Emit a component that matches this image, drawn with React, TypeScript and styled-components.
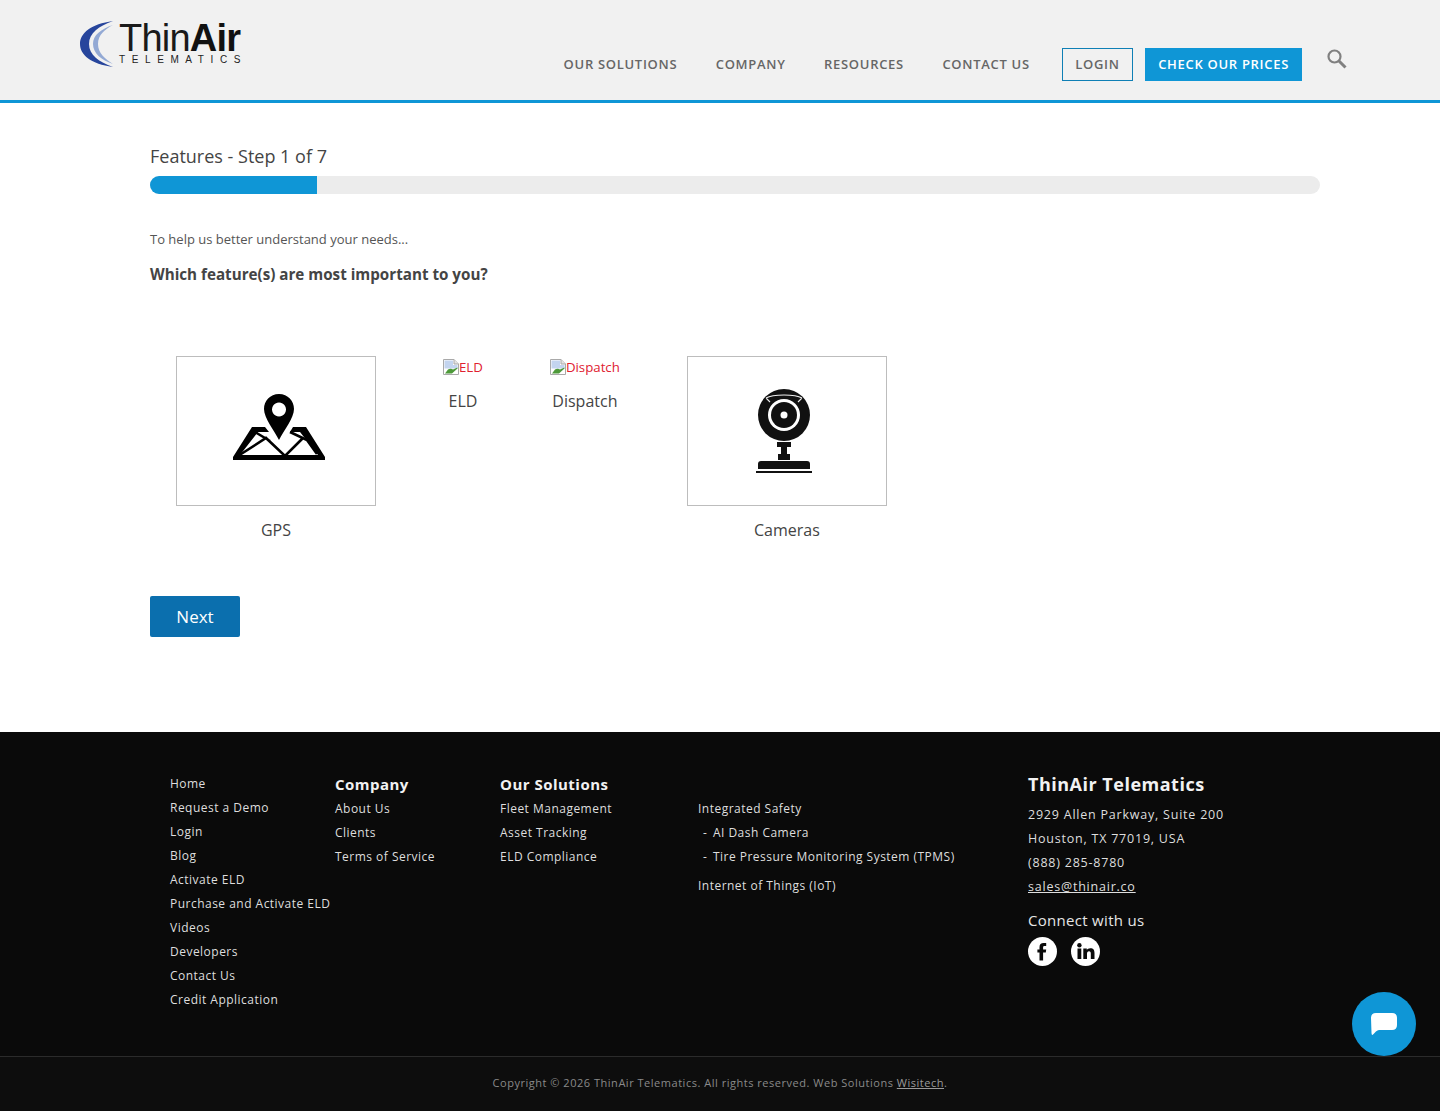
import React from "react";
import styled, { createGlobalStyle } from "styled-components";

const Global = createGlobalStyle`
  html, body { margin: 0; padding: 0; background: #fff; }
  body { font-family: "Open Sans", "Liberation Sans", sans-serif; color: #444; }
  * { box-sizing: border-box; }
`;

const Page = styled.div`
  width: 1440px;
  height: 1111px;
  overflow: hidden;
  position: relative;
  display: flex;
  flex-direction: column;
`;

const Header = styled.header`
  height: 103px;
  flex: none;
  background: #f1f1f1;
  border-bottom: 3px solid #0f96d6;
  display: flex;
  align-items: flex-start;
  padding: 0 92px 0 80px;
`;

const LogoBox = styled.div`
  display: flex;
  align-items: flex-start;
  padding-top: 19px;
  width: 170px;
  flex: none;
`;

const LogoText = styled.div`
  display: flex;
  flex-direction: column;
  margin-left: -1px;
`;

const LogoName = styled.div`
  font-family: "Liberation Sans", Arial, sans-serif;
  font-size: 38px;
  line-height: 36px;
  letter-spacing: -0.8px;
  margin-top: 1px;
  color: #1a1a1a;
  white-space: nowrap;
  b { font-weight: 700; color: #111; }
`;

const LogoSub = styled.div`
  font-family: "Liberation Sans", Arial, sans-serif;
  font-size: 10px;
  line-height: 12px;
  letter-spacing: 6.6px;
  color: #222;
  margin-top: -2px;
  white-space: nowrap;
`;

const Nav = styled.nav`
  margin-left: auto;
  display: flex;
  align-items: flex-start;
  padding-top: 48px;
`;

const NavLink = styled.a`
  font-size: 13px;
  font-weight: 600;
  letter-spacing: 0.7px;
  line-height: 33px;
  color: #666;
  margin-right: 38.5px;
  white-space: nowrap;
  &:nth-child(4) { margin-right: 32px; }
`;

const LoginButton = styled.a`
  height: 33px;
  padding: 0 12.5px;
  border: 1px solid #0f7fb5;
  font-size: 13px;
  font-weight: 600;
  letter-spacing: 0.7px;
  line-height: 31px;
  color: #666;
  margin-right: 12px;
`;

const PriceButton = styled.a`
  height: 33px;
  padding: 0 13px;
  background: #0f96d6;
  font-size: 13px;
  font-weight: 600;
  letter-spacing: 0.7px;
  line-height: 33px;
  color: #fff;
  margin-right: 24px;
`;

const SearchIcon = styled.svg`
  width: 22px;
  height: 22px;
  display: block;
`;

const Main = styled.main`
  flex: 1;
  padding: 41px 120px 0 150px;
`;

const StepTitle = styled.h2`
  margin: 0;
  font-size: 18px;
  font-weight: 400;
  line-height: 25px;
  color: #444;
`;

const Progress = styled.div`
  margin-top: 7px;
  height: 18px;
  border-radius: 9px;
  background: #ececec;
  overflow: hidden;
`;

const ProgressFill = styled.div`
  height: 100%;
  background: #0f96d6;
`;

const Intro = styled.p`
  margin: 35px 0 0;
  font-size: 13px;
  line-height: 20px;
  color: #555;
`;

const Question = styled.p`
  margin: 14px 0 0;
  font-size: 15.2px;
  font-weight: 700;
  line-height: 22px;
  color: #444;
`;

const Options = styled.div`
  display: flex;
  align-items: flex-start;
  gap: 67px;
  padding-left: 26px;
  margin-top: 71px;
`;

const Option = styled.div`
  display: flex;
  flex-direction: column;
  align-items: center;
`;

const Tile = styled.div`
  width: 200px;
  height: 150px;
  border: 1px solid #bdbdbd;
  display: flex;
  align-items: center;
  justify-content: center;
`;

const TileIcon = styled.svg<{ $dx: number; $dy: number }>`
  display: block;
  transform: translate(${(p) => p.$dx}px, ${(p) => p.$dy}px);
`;

const TileLabel = styled.div`
  margin-top: 13px;
  font-size: 16px;
  line-height: 22px;
  color: #444;
`;

const BrokenImage = styled.div`
  display: flex;
  align-items: center;
  height: 22px;
  font-size: 13.25px;
  line-height: 22px;
  color: #e02030;
  white-space: nowrap;
`;

const BrokenLabel = styled.div`
  margin-top: 12px;
  font-size: 16px;
  line-height: 22px;
  color: #444;
`;

const NextButton = styled.button`
  display: block;
  margin-top: 55px;
  width: 90px;
  height: 41px;
  border: 0;
  border-radius: 2px;
  background: #0b6fae;
  color: #fff;
  font-family: inherit;
  font-size: 17px;
  padding: 0;
`;

const Footer = styled.footer`
  flex: none;
  height: 379px;
  background: #0a0a0a;
  color: #e6e6e6;
  display: flex;
  flex-direction: column;
`;

const FooterColumns = styled.div`
  height: 324px;
  display: grid;
  grid-template-columns: 165px 165px 198px 330px 1fr;
  padding: 40px 0 0 170px;
`;

const FooterColumn = styled.div`
  display: flex;
  flex-direction: column;
  align-items: flex-start;
`;

const FooterHeading = styled.div`
  font-size: 15px;
  font-weight: 700;
  line-height: 24px;
  letter-spacing: 0.48px;
  color: #f2f2f2;
  height: 25px;
`;

const FooterLink = styled.a<{ $gap?: number; $indent?: number }>`
  font-size: 12px;
  line-height: 24px;
  letter-spacing: 0.48px;
  color: #dedede;
  white-space: pre;
  margin-top: ${(p) => p.$gap ?? 0}px;
  margin-left: ${(p) => p.$indent ?? 0}px;
`;

const Dash = styled.span`
  margin-right: 2px;
`;

const Spacer = styled.div`
  height: 25px;
`;

const CompanyName = styled.div`
  font-size: 18px;
  font-weight: 700;
  line-height: 24px;
  letter-spacing: 0.5px;
  color: #f2f2f2;
  margin: 0 0 7px;
`;

const AddressLine = styled.div`
  font-size: 12.5px;
  line-height: 24px;
  letter-spacing: 0.78px;
  color: #dedede;
`;

const MailLink = styled(AddressLine)`
  text-decoration: underline;
`;

const Connect = styled.div`
  font-size: 15px;
  line-height: 22px;
  letter-spacing: 0.3px;
  color: #e6e6e6;
  margin-top: 10px;
`;

const Socials = styled.div`
  display: flex;
  gap: 14px;
  margin-top: 6px;
`;

const Social = styled.svg`
  width: 29px;
  height: 29px;
  display: block;
`;

const Copyright = styled.div`
  flex: 1;
  border-top: 1px solid #2b2b2b;
  background: #0d0d0d;
  display: flex;
  justify-content: center;
  padding-top: 16px;
  font-size: 11px;
  line-height: 20px;
  letter-spacing: 0.52px;
  color: #8a8a8a;
  a { text-decoration: underline; color: #9a9a9a; }
`;

const ChatButton = styled.div`
  position: absolute;
  left: 1352px;
  top: 992px;
  width: 64px;
  height: 64px;
  border-radius: 50%;
  background: #0f96d6;
  display: flex;
  align-items: center;
  justify-content: center;
`;

const BrokenIcon = () => (
  <svg width="16" height="16" viewBox="0 0 16 16" style={{ display: "block", flex: "none" }}>
    <path d="M.5 .5H11L15.5 5V15.5H.5Z" fill="#fff" stroke="#a9a9a9" />
    <path d="M11 .5V5H15.5" fill="#e4e4e4" stroke="#a9a9a9" />
    <path d="M1.5 1.5H10V6H14.5V9.5H1.5Z" fill="#c3d4ef" />
    <path d="M2 14.5 L5 10.5 C7 9 9 10 10 10.5 L14.5 8.5 V9.5 L9 14.5Z" fill="#4e9a3a" />
  </svg>
);

const nav = ["OUR SOLUTIONS", "COMPANY", "RESOURCES", "CONTACT US"];
const col1 = ["Home", "Request a Demo", "Login", "Blog", "Activate ELD", "Purchase and Activate ELD", "Videos", "Developers", "Contact Us", "Credit Application"];
const col2 = ["About Us", "Clients", "Terms of Service"];
const col3 = ["Fleet Management", "Asset Tracking", "ELD Compliance"];

export default function App() {
  return (
    <Page>
      <Global />
      <Header>
        <LogoBox>
          <svg width="40" height="50" viewBox="0 0 40 50" style={{ flex: "none", display: "block" }}>
            <path d="M33 2 C11 5 0 14 0 25 C0 36 11 45 33 48 C19 43 9 36 9 25 C9 14 19 7 33 2Z" fill="#27459c" />
            <path d="M33 6 C21 10 13 16 13 25 C13 34 21 41 33 45 C25 40 18 34 18 25 C18 16 25 10 33 6Z" fill="#93a9d4" />
          </svg>
          <LogoText>
            <LogoName>Thin<b>Air</b></LogoName>
            <LogoSub>TELEMATICS</LogoSub>
          </LogoText>
        </LogoBox>
        <Nav>
          {nav.map((n) => <NavLink key={n}>{n}</NavLink>)}
          <LoginButton>LOGIN</LoginButton>
          <PriceButton>CHECK OUR PRICES</PriceButton>
          <SearchIcon viewBox="0 0 22 22">
            <circle cx="8.5" cy="8.5" r="6" fill="none" stroke="#808080" strokeWidth="2.2" />
            <path d="M13 13 L19.5 19.5" stroke="#808080" strokeWidth="3" />
          </SearchIcon>
        </Nav>
      </Header>
      <Main>
        <StepTitle>Features - Step 1 of 7</StepTitle>
        <Progress><ProgressFill style={{ width: `${(1 / 7) * 100}%` }} /></Progress>
        <Intro>To help us better understand your needs...</Intro>
        <Question>Which feature(s) are most important to you?</Question>
        <Options>
          <Option>
            <Tile>
              <TileIcon $dx={3} $dy={-4} width="92" height="66" viewBox="0 0 92 66">
                <path fillRule="evenodd" d="M46 0 C37 0 31 7 31 15 C31 24 41 36 46 46 C51 36 61 24 61 15 C61 7 55 0 46 0Z M46 8.5 A7 7 0 1 0 46.01 8.5Z" fill="#000" />
                <path d="M0 66 L0 63 L19 33 H32 L36 38 H25 L7 61 H85 L67 38 H57 L60 33 H73 L92 63 V66Z" fill="#000" />
                <path d="M5 62 L33 44 L52 62 L70 44 M22 38 L37 47 M57 38 L74 46 L84 60" fill="none" stroke="#000" strokeWidth="2.6" />
              </TileIcon>
            </Tile>
            <TileLabel>GPS</TileLabel>
          </Option>
          <Option>
            <BrokenImage><BrokenIcon />ELD</BrokenImage>
            <BrokenLabel>ELD</BrokenLabel>
          </Option>
          <Option>
            <BrokenImage><BrokenIcon />Dispatch</BrokenImage>
            <BrokenLabel>Dispatch</BrokenLabel>
          </Option>
          <Option>
            <Tile>
              <TileIcon $dx={-3} $dy={0} width="56" height="84" viewBox="0 0 56 84">
                <circle cx="28" cy="26" r="26" fill="#111" />
                <path d="M10 9 C17 5 39 5 46 9 M10 9 L14 13 M46 9 L42 13" fill="none" stroke="#eee" strokeWidth="1.1" />
                <circle cx="28" cy="26" r="16" fill="#fff" />
                <circle cx="28" cy="26" r="13" fill="#111" />
                <circle cx="28" cy="26" r="3.5" fill="#fff" />
                <path d="M21 53 H35 V58 H31 V65 H34 V71 H22 V65 H25 V58 H21Z" fill="#111" />
                <path d="M2 80 V75 Q2 72 5 72 H51 Q54 72 54 75 V80Z" fill="#111" />
                <path d="M0 82 H56 V84 H0Z" fill="#111" />
              </TileIcon>
            </Tile>
            <TileLabel>Cameras</TileLabel>
          </Option>
        </Options>
        <NextButton>Next</NextButton>
      </Main>
      <Footer>
        <FooterColumns>
          <FooterColumn>
            {col1.map((t) => <FooterLink key={t}>{t}</FooterLink>)}
          </FooterColumn>
          <FooterColumn>
            <FooterHeading>Company</FooterHeading>
            {col2.map((t) => <FooterLink key={t}>{t}</FooterLink>)}
          </FooterColumn>
          <FooterColumn>
            <FooterHeading>Our Solutions</FooterHeading>
            {col3.map((t) => <FooterLink key={t}>{t}</FooterLink>)}
          </FooterColumn>
          <FooterColumn>
            <Spacer />
            <FooterLink>Integrated Safety</FooterLink>
            <FooterLink $indent={5}><Dash>-</Dash> AI Dash Camera</FooterLink>
            <FooterLink $indent={5}><Dash>-</Dash> Tire Pressure Monitoring System (TPMS)</FooterLink>
            <FooterLink $gap={5}>Internet of Things (IoT)</FooterLink>
          </FooterColumn>
          <FooterColumn>
            <CompanyName>ThinAir Telematics</CompanyName>
            <AddressLine>2929 Allen Parkway, Suite 200</AddressLine>
            <AddressLine>Houston, TX 77019, USA</AddressLine>
            <AddressLine>(888) 285-8780</AddressLine>
            <MailLink>sales@thinair.co</MailLink>
            <Connect>Connect with us</Connect>
            <Socials>
              <Social viewBox="0 0 29 29">
                <circle cx="14.5" cy="14.5" r="14.5" fill="#fff" />
                <path d="M11.5 23.5 V15.6 H9.4 V12.4 H11.5 V10.2 C11.5 7.4 13 6 15.6 6 C16.7 6 17.8 6.1 18.2 6.1 V9 H16.6 C15.3 9 15.1 9.6 15.1 10.5 V12.4 H18.2 L17.8 15.6 H15.1 V23.5Z" fill="#0a0a0a" />
              </Social>
              <Social viewBox="0 0 29 29">
                <circle cx="14.5" cy="14.5" r="14.5" fill="#fff" />
                <circle cx="8.4" cy="8.3" r="2.2" fill="#0a0a0a" />
                <path d="M6.5 11.6 H10.3 V22 H6.5Z M12.3 11.6 H15.8 V13 C16.4 12 17.7 11.3 19.2 11.3 C22.6 11.3 23.5 13.3 23.5 16.2 V22 H19.8 V16.8 C19.8 15.5 19.5 14.3 18 14.3 C16.6 14.3 16 15.4 16 16.8 V22 H12.3Z" fill="#0a0a0a" />
              </Social>
            </Socials>
          </FooterColumn>
        </FooterColumns>
        <Copyright>
          <span>Copyright © 2026 ThinAir Telematics. All rights reserved. Web Solutions <a>Wisitech</a>.</span>
        </Copyright>
      </Footer>
      <ChatButton>
        <svg width="26" height="26" viewBox="0 0 26 26">
          <path d="M0 7 Q0 2 5 2 H21 Q26 2 26 7 V14 Q26 19 21 19 H8 C6 19 4 21.5 1.5 24 Q0.5 24 0.5 22 Z" fill="#fff" />
        </svg>
      </ChatButton>
    </Page>
  );
}
